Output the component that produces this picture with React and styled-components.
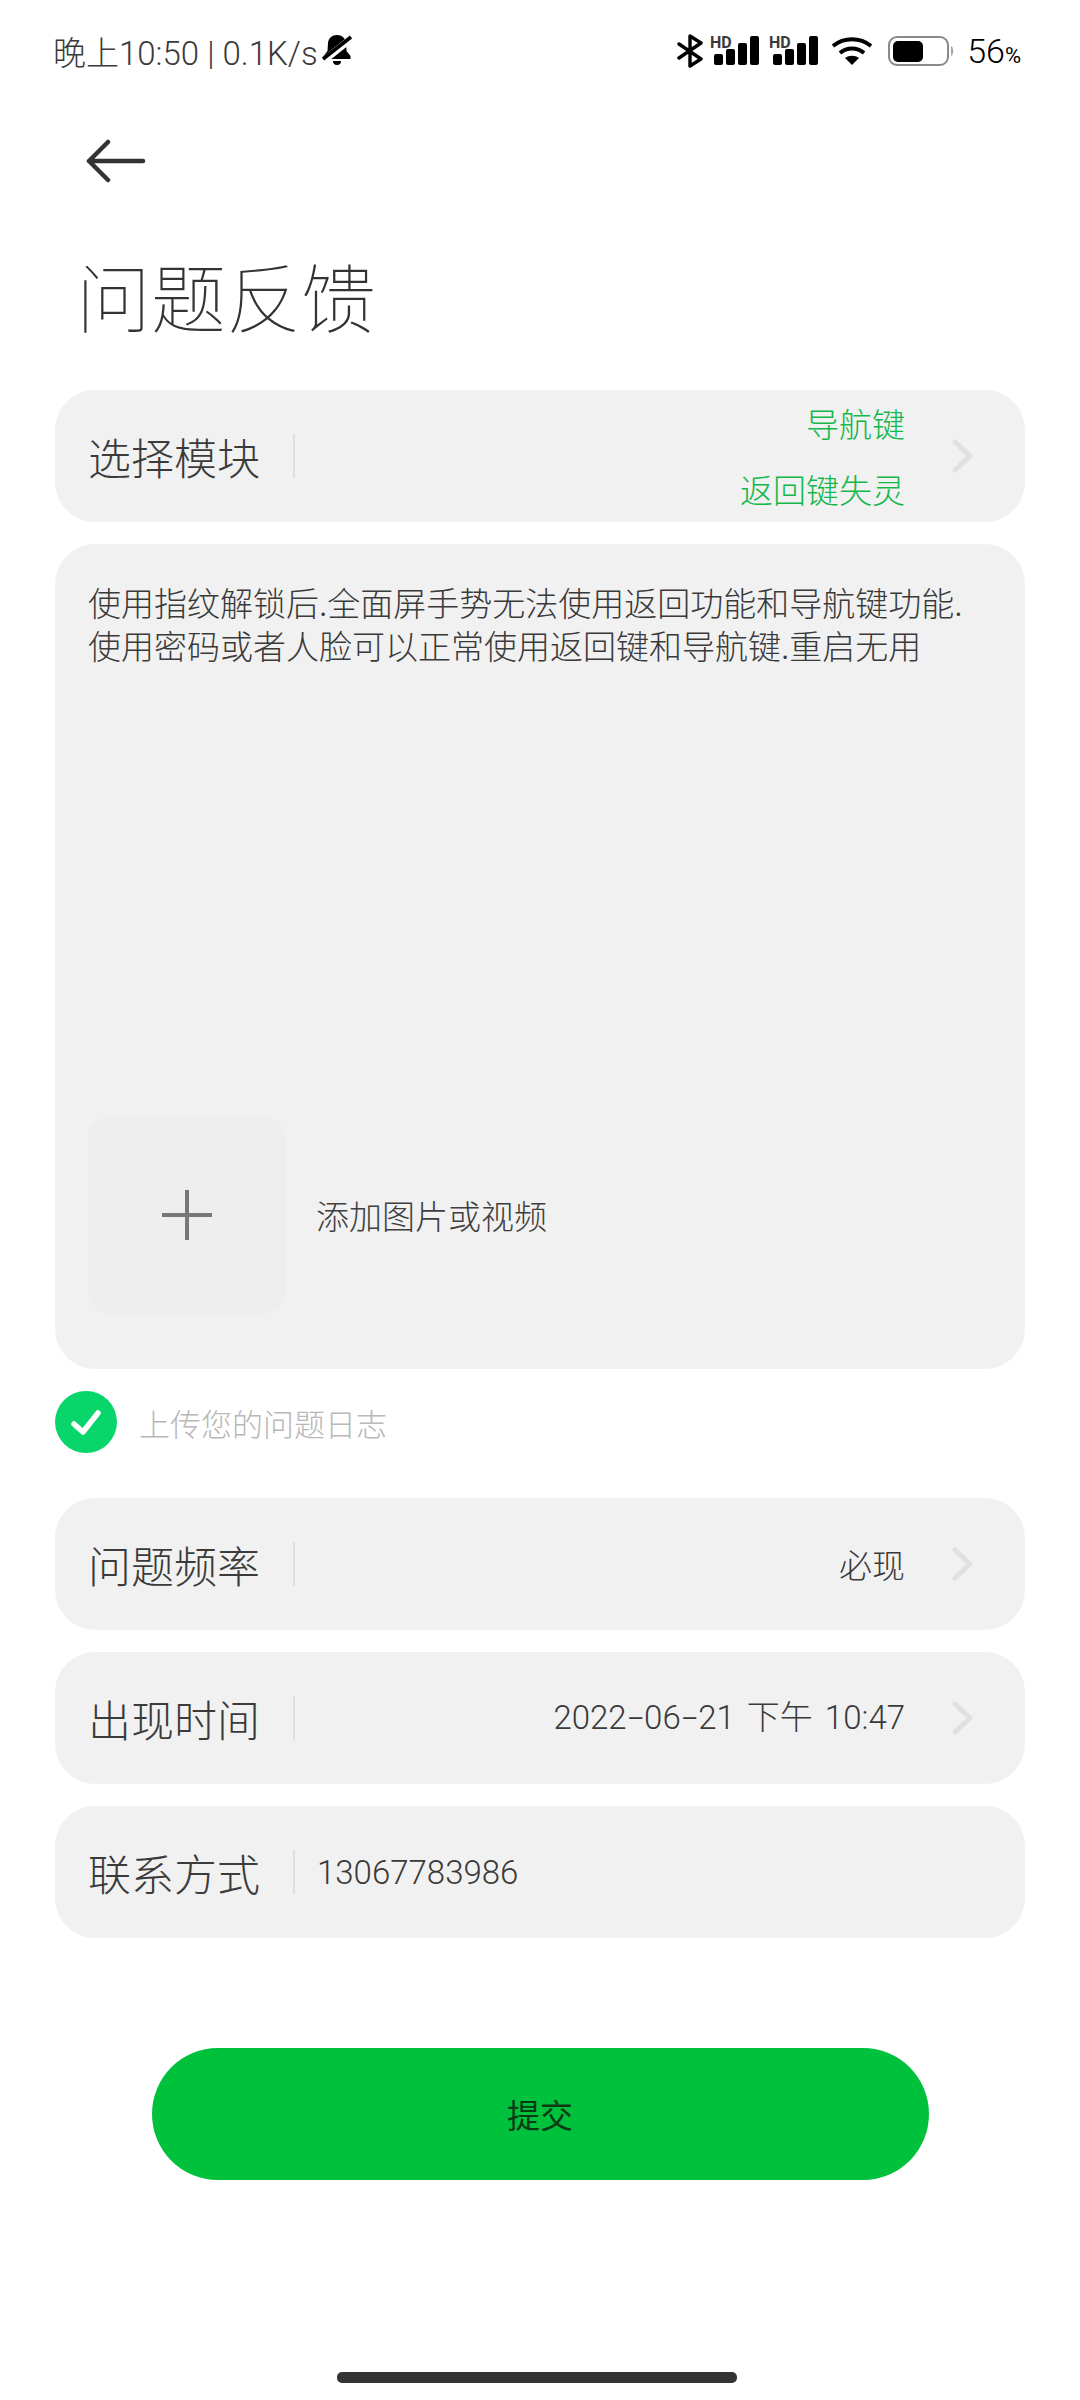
import React from 'react';
import styled, { createGlobalStyle } from 'styled-components';

const Global = createGlobalStyle`
  html, body { margin: 0; padding: 0; background: #fff; }
  body { font-family: "Noto Sans CJK SC", Roboto, sans-serif; }
`;

const Page = styled.div`
  width: 1080px;
  height: 2400px;
  overflow: hidden;
  background: #fff;
  display: flex;
  flex-direction: column;
`;

const StatusBar = styled.div`
  height: 102px;
  box-sizing: border-box;
  padding: 0 59px 0 53px;
  display: flex;
  align-items: center;
  justify-content: space-between;
`;

const StatusLeft = styled.div`
  display: flex;
  align-items: center;
  gap: 3px;
  font-family: Roboto, "Noto Sans CJK SC", sans-serif;
  font-size: 33px;
  font-weight: 300;
  color: #3a3a3a;
`;

const StatusRight = styled.div`
  display: flex;
  align-items: center;
`;

const Percent = styled.span`
  font-family: Roboto, sans-serif;
  font-size: 34px;
  font-weight: 300;
  color: #000;
  margin-left: 11px;
  small { font-size: 22px; font-weight: 400; }
`;

const BackButton = styled.div`
  height: 90px;
  padding-left: 85px;
  display: flex;
  align-items: center;
  margin-top: 14px;
`;

const Title = styled.h1`
  margin: 35px 0 0 76px;
  height: 123px;
  font-size: 75px;
  line-height: 108px;
  font-weight: 100;
  color: #333;
`;

const Form = styled.div`
  margin: 26px 55px 0;
  display: flex;
  flex-direction: column;
`;

const Card = styled.div`
  background: #f1f1f1;
  border-radius: 40px;
`;

const Row = styled(Card)`
  height: 132px;
  display: flex;
  align-items: center;
  margin-bottom: 22px;
  padding: 0 33px;
  box-sizing: border-box;
`;

const Label = styled.div`
  width: 172px;
  font-size: 43px;
  font-weight: 300;
  color: #3b3b3b;
  line-height: 44px;
  white-space: nowrap;
`;

const Divider = styled.div`
  width: 2px;
  height: 44px;
  background: #e0e0e0;
  margin-left: 33px;
`;

const Value = styled.div`
  flex: 1;
  display: flex;
  flex-direction: column;
  align-items: flex-end;
  gap: 20px;
  font-size: 33px;
  font-weight: 300;
  line-height: 46px;
  color: ${p => (p.$green ? '#12b84b' : '#3a3a3a')};
  font-family: ${p => (p.$latin ? 'Roboto, "Noto Sans CJK SC", sans-serif' : 'inherit')};
  word-spacing: ${p => (p.$latin ? '4px' : '0')};
`;

const Dash = styled.span`
  display: inline-block;
  margin: 0 4px;
  transform: scaleX(1.7);
`;

const Contact = styled.div`
  margin-left: 22px;
  font-family: Roboto, sans-serif;
  font-size: 33px;
  font-weight: 300;
  color: #3a3a3a;
`;

const Chevron = styled.svg`
  width: 24px;
  height: 36px;
  margin-left: 46px;
  margin-right: 17px;
`;

const Editor = styled(Card)`
  height: 825px;
  box-sizing: border-box;
  padding: 37px 33px 55px;
  display: flex;
  flex-direction: column;
  justify-content: space-between;
`;

const Description = styled.p`
  margin: 0;
  font-size: 33px;
  font-weight: 300;
  line-height: 43px;
  color: #3a3a3a;
  white-space: pre-line;
`;

const Attach = styled.div`
  display: flex;
  align-items: center;
  gap: 30px;
`;

const AddBox = styled.div`
  width: 198px;
  height: 198px;
  background: #eeeeee;
  border-radius: 22px;
  display: flex;
  align-items: center;
  justify-content: center;
`;

const AttachText = styled.span`
  font-size: 33px;
  font-weight: 300;
  color: #3f3f3f;
`;

const Consent = styled.div`
  display: flex;
  align-items: center;
  gap: 22px;
  margin: 22px 0 45px;
  font-size: 31px;
  font-weight: 300;
  color: #b8b8b8;
`;

const Submit = styled.div`
  width: 777px;
  height: 132px;
  margin: 88px auto 0;
  border-radius: 66px;
  background: #00c13c;
  display: flex;
  align-items: center;
  justify-content: center;
  font-size: 33px;
  font-weight: 400;
  color: #0b3a14;
`;

const HomeBar = styled.div`
  width: 400px;
  height: 11px;
  border-radius: 5px;
  background: #333;
  margin: auto 0 17px 337px;
`;

const MuteBell = () => (
  <svg width="32" height="34" viewBox="0 0 32 34" fill="#000">
    <path d="M16 1c-5 0-8.500 3-9 8l-.5 8-4 5v3h27v-3l-4-5-.5-8C24.500 4 21 1 16 1z" />
    <path d="M12 27h8a4 4 0 0 1-8 0z" />
    <path d="M1 28 31 4" stroke="#fff" strokeWidth="7" />
    <path d="M2 25 30 3" stroke="#000" strokeWidth="3.500" />
  </svg>
);

const Bluetooth = () => (
  <svg width="27" height="34" viewBox="0 0 27 34" fill="none" stroke="#000" strokeWidth="3.400" strokeLinecap="round" strokeLinejoin="round">
    <path d="M2 10l22 15-11 7V2l11 7L2 24" />
  </svg>
);

const Signal = ({ first }) => (
  <svg width="56" height="36" viewBox="0 0 56 36" style={{ marginLeft: first ? 2 : 3 }}>
    <text x="4" y="15" fontFamily="Roboto, sans-serif" fontSize="16" fontWeight="700" fill="#3a3a3a">HD</text>
    <rect x="8" y="21" width="9" height="11" rx="2" />
    <rect x="20" y="16" width="9" height="16" rx="2" />
    <rect x="32" y="10" width="9" height="22" rx="2" />
    <rect x="44" y="3" width="9" height="29" rx="2" />
  </svg>
);

const Wifi = () => (
  <svg width="42" height="30" viewBox="0 0 42 30" fill="none" stroke="#000" strokeWidth="4" style={{ marginLeft: 10 }}>
    <path d="M2 10c11-9 27-9 38 0" />
    <path d="M9 17c7-6 17-6 24 0" />
    <path d="M21 29l-7-7c4-3 10-3 14 0z" fill="#000" stroke="none" />
  </svg>
);

const Battery = () => (
  <svg width="68" height="32" viewBox="0 0 68 32" style={{ marginLeft: 15 }}>
    <rect x="1" y="2" width="59" height="28" rx="8" fill="none" stroke="#8a8a8a" strokeWidth="2" />
    <rect x="5" y="6" width="30" height="21" rx="5" fill="#000" />
    <path d="M63 11c3 1 3 9 0 10z" fill="#a8a8a8" />
  </svg>
);

const ArrowRight = () => (
  <Chevron viewBox="0 0 24 36" fill="none" stroke="#e0e0e0" strokeWidth="5" strokeLinecap="round" strokeLinejoin="round">
    <path d="M4 4l15 14L4 32" />
  </Chevron>
);

const Divided = ({ label, children }) => (
  <Row>
    <Label>{label}</Label>
    <Divider />
    {children}
  </Row>
);

export default function App() {
  return (
    <Page>
      <Global />
      <StatusBar>
        <StatusLeft>
          晚上10:50 | 0.1K/s
          <MuteBell />
        </StatusLeft>
        <StatusRight>
          <Bluetooth />
          <Signal first />
          <Signal />
          <Wifi />
          <Battery />
          <Percent>56<small>%</small></Percent>
        </StatusRight>
      </StatusBar>
      <BackButton>
        <svg width="62" height="44" viewBox="0 0 62 44" fill="none" stroke="#333" strokeWidth="4.500" strokeLinecap="round" strokeLinejoin="round">
          <path d="M58 22H4M23 3 4 22l19 19" />
        </svg>
      </BackButton>
      <Title>问题反馈</Title>
      <Form>
        <Divided label="选择模块">
          <Value $green>
            <span>导航键</span>
            <span>返回键失灵</span>
          </Value>
          <ArrowRight />
        </Divided>
        <Editor>
          <Description>{'使用指纹解锁后.全面屏手势无法使用返回功能和导航键功能.\n使用密码或者人脸可以正常使用返回键和导航键.重启无用'}</Description>
          <Attach>
            <AddBox>
              <svg width="50" height="50" viewBox="0 0 50 50" stroke="#777" strokeWidth="4">
                <path d="M25 0v50M0 25h50" />
              </svg>
            </AddBox>
            <AttachText>添加图片或视频</AttachText>
          </Attach>
        </Editor>
        <Consent>
          <svg width="62" height="62" viewBox="0 0 62 62">
            <circle cx="31" cy="31" r="31" fill="#08d66a" />
            <path d="M19 33l9 8 15-19" fill="none" stroke="#fff" strokeWidth="5.500" strokeLinecap="round" strokeLinejoin="round" />
          </svg>
          上传您的问题日志
        </Consent>
        <Divided label="问题频率">
          <Value>必现</Value>
          <ArrowRight />
        </Divided>
        <Divided label="出现时间">
          <Value $latin>
            <span>2022<Dash>-</Dash>06<Dash>-</Dash>21 下午 10:47</span>
          </Value>
          <ArrowRight />
        </Divided>
        <Divided label="联系方式">
          <Contact>13067783986</Contact>
        </Divided>
      </Form>
      <Submit>提交</Submit>
      <HomeBar />
    </Page>
  );
}
